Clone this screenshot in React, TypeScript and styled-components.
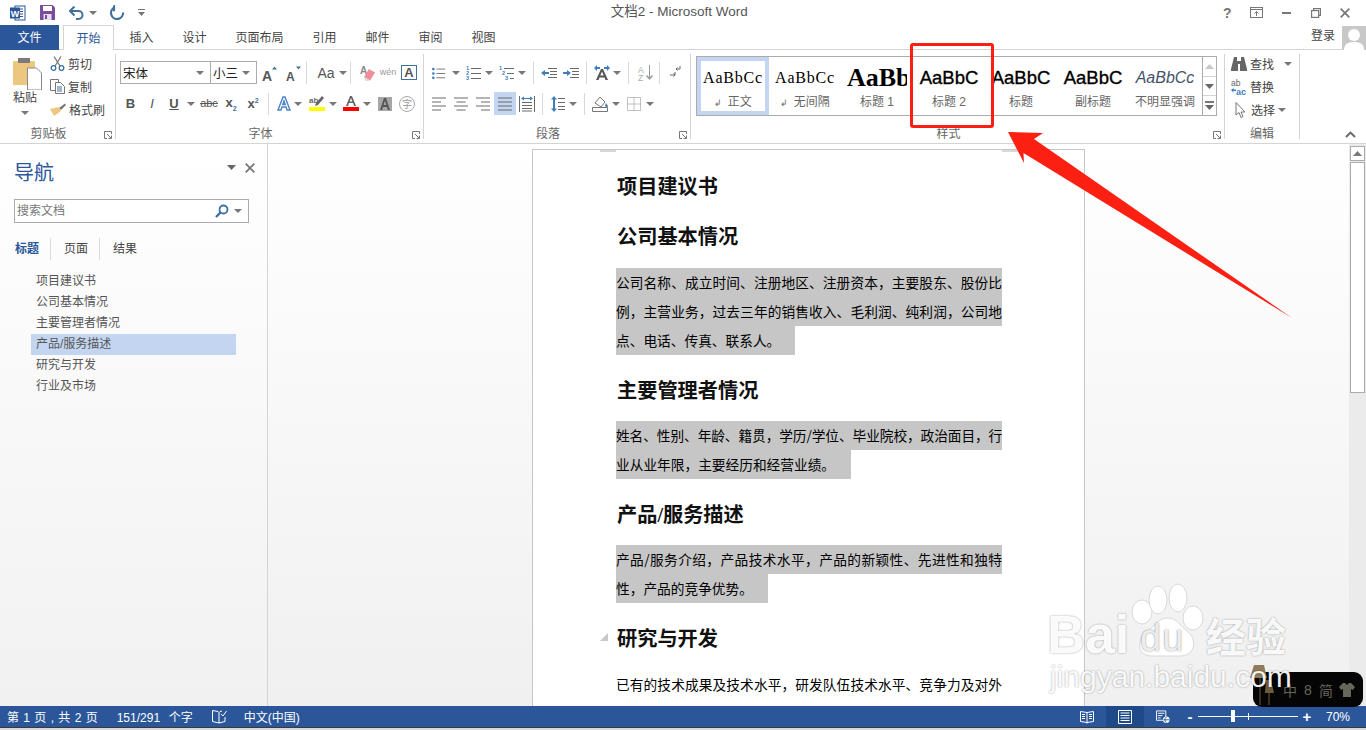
import React from "react";
import styled, { createGlobalStyle } from "styled-components";

const UI = `"Liberation Sans", "Noto Sans CJK SC", sans-serif`;
const BLUE = "#2b579a";
const ICON = "#6a6a6a";
const ACCENT = "#41719c";

const Global = createGlobalStyle`
  html, body { margin: 0; padding: 0; background: #fff; overflow: hidden; }
  * { box-sizing: border-box; }
`;

const Screen = styled.div`
  position: relative; width: 1366px; height: 730px; overflow: hidden;
  display: flex; flex-direction: column;
  font-family: ${UI}; font-size: 12px; color: #444; background: #fff;
`;

/* ---------- title bar ---------- */
const TitleBar = styled.header`
  flex: none; height: 25px; position: relative;
  display: flex; align-items: center; padding-left: 10px;
`;
const QuickTool = styled.span<{ $w: number; $ml?: number }>`
  width: ${p => p.$w}px; margin-left: ${p => p.$ml ?? 0}px; height: 16px;
  display: flex; align-items: center; justify-content: center; flex: none;
`;
const TitleText = styled.div`
  flex: 1; text-align: center; font-size: 13.5px; line-height: 16px; color: #555; padding: 0 0 2px 0; white-space: nowrap;
`;
const WindowButtons = styled.div`display: flex; align-items: center; padding-right: 6px;`;
const WinBtn = styled.span`
  width: 29.5px; height: 16px; display: flex; align-items: center; justify-content: center;
  font-size: 14px; font-weight: bold; color: #777;
`;

/* ---------- tabs ---------- */
const TabRow = styled.nav`
  flex: none; height: 25px; display: flex; align-items: stretch;
  border-bottom: 1px solid #d4d4d4;
`;
const FileTab = styled.div`
  width: 59px; height: 25px; background: ${BLUE}; color: #fff; margin-right: 4px; padding-bottom: 2px;
  display: flex; align-items: center; justify-content: center;
`;
const ActiveTab = styled.div`
  width: 51px; height: 25px; background: #fff; color: ${BLUE}; margin-right: 1px; padding-bottom: 2px;
  border: 1px solid #d4d4d4; border-bottom: 0;
  display: flex; align-items: center; justify-content: center;
`;
const Tab = styled.div`
  padding: 0 14.5px 2px; display: flex; align-items: center; color: #444;
`;
const Login = styled.div`
  margin-left: auto; display: flex; align-items: flex-start; gap: 7px; color: #444;
  span { line-height: 20px; padding-top: 1px; }
`;
const Avatar = styled.div`width: 24px; height: 24px; margin-top: 1px; background: #c8c8c8; overflow: hidden;`;

/* ---------- ribbon ---------- */
const Ribbon = styled.section`
  flex: none; height: 94px; padding: 4px 0; display: flex;
  border-bottom: 1px solid #d4d4d4; background: #fff;
`;
const Group = styled.div<{ $w: number }>`
  width: ${p => p.$w}px; flex: none; height: 85px; position: relative;
  display: flex; flex-direction: column; border-right: 1px solid #d4d4d4;
`;
const GroupBody = styled.div<{ $pl?: number; $pt?: number }>`
  flex: 1; min-height: 0; padding: ${p => p.$pt ?? 7}px 0 0 ${p => p.$pl ?? 0}px;
  display: flex; flex-direction: column; gap: 8px;
`;
const GroupLabel = styled.div<{ $launch?: boolean }>`
  flex: none; height: 15px; line-height: 15px; margin-bottom: -3px; text-align: center; color: #666;
  padding-right: ${p => (p.$launch ? 18 : 0)}px;
`;
const Launcher = styled.span`position: absolute; right: 3px; bottom: 0; display: flex;`;
const ToolRow = styled.div`display: flex; align-items: center; height: 23px;`;
const Tool = styled.span<{ $w: number; $ml?: number; $on?: boolean }>`
  width: ${p => p.$w}px; margin-left: ${p => p.$ml ?? 0}px; height: 23px; flex: none;
  display: flex; align-items: center; justify-content: center;
  background: ${p => (p.$on ? "#c3d5f0" : "transparent")}; color: #555;
`;
const VSep = styled.i<{ $ml?: number }>`
  width: 1px; height: 22px; margin-left: ${p => p.$ml ?? 0}px; background: #d9d9d9; flex: none;
`;
const Caret = styled.i<{ $ml?: number }>`
  display: block; flex: none; width: 8px; height: 4px; margin-left: ${p => p.$ml ?? 0}px;
  border-top: 4px solid #777; border-left: 4px solid transparent; border-right: 4px solid transparent;
`;
const FontBox = styled.div<{ $w: number; $ml?: number }>`
  width: ${p => p.$w}px; margin-left: ${p => p.$ml ?? 0}px; height: 23px; flex: none;
  border: 1px solid #ababab; padding: 0 6px 0 2px; background: #fff;
  display: flex; align-items: center; justify-content: space-between; color: #222; font-size: 12.5px;
`;
const LetterIcon = styled.b<{ $size?: number; $color?: string; $weight?: number; $italic?: boolean; $line?: string }>`
  font-size: ${p => p.$size ?? 13}px; color: ${p => p.$color ?? "#555"};
  font-weight: ${p => p.$weight ?? 700}; font-style: ${p => (p.$italic ? "italic" : "normal")};
  font-family: "Liberation Sans", sans-serif; line-height: 1;
  text-decoration: ${p => p.$line ?? "none"};
  sub, sup { font-size: 7px; color: ${ACCENT}; }
`;
const BoxedA = styled(LetterIcon)`border: 1px solid ${ACCENT}; padding: 0 2px;`;
const RoundChar = styled(LetterIcon)`
  border: 1px solid #aaa; border-radius: 8px; padding: 2px;
  font-family: "Noto Sans CJK SC", sans-serif;
`;

const ClipWrap = styled.div`flex: 1; display: flex; min-height: 0;`;
const PasteCol = styled.div`
  width: 50px; padding: 4px 0 0 13px; flex: none;
  display: flex; flex-direction: column; align-items: flex-start; color: #444;
  span { line-height: 16px; margin-top: 0; }
  i { margin: 5px 0 0 8px; }
`;
const SmallCmds = styled.div`margin-top: -2px; display: flex; flex-direction: column;`;
const SmallCmd = styled.div<{ $pl?: number }>`
  height: 23px; display: flex; align-items: center; gap: 3px; color: #444; padding-left: ${p => p.$pl ?? 0}px;
  svg { flex: none; }
`;

/* styles gallery */
const Gallery = styled.div`
  margin: 2px 0 0 5px; width: 521px; height: 60px; flex: none;
  border: 1px solid #ababab; display: flex; background: #fff;
`;
const StyleItems = styled.div`flex: 1; display: flex; overflow: hidden;`;
const StyleItem = styled.div<{ $on?: boolean }>`
  width: 72px; height: 58px; flex: none; overflow: hidden; padding: 3px 3px 0;
  border: ${p => (p.$on ? "4px solid #c3d5f0" : "4px solid transparent")};
  display: flex; flex-direction: column; align-items: center;
`;
const StyleSample = styled.div<{ $kind: string }>`
  height: 27px; line-height: 27px; width: 60px; overflow: hidden; white-space: nowrap; color: #000;
  font-family: ${p => (p.$kind === "serif" || p.$kind === "big" ? `"Liberation Serif", serif` : `"Liberation Sans", sans-serif`)};
  font-size: ${p => ({ serif: 16, big: 26, head: 18.5, mute: 16 } as Record<string, number>)[p.$kind]}px;
  font-weight: ${p => (p.$kind === "big" ? 700 : 400)};
  font-style: ${p => (p.$kind === "mute" ? "italic" : "normal")};
  letter-spacing: ${p => (p.$kind === "serif" ? "0.8px" : "0")};
  text-align: ${p => (p.$kind === "big" ? "left" : "center")};
  ${p => (p.$kind === "head" ? "-webkit-text-stroke: 0.35px #000;" : "")}
  ${p => (p.$kind === "mute" ? "color: #44546a;" : "")}
`;
const StyleName = styled.div`
  line-height: 15px; margin-top: 3.5px; color: #666; white-space: nowrap; font-size: 12px;
  small { font-size: 9px; margin-right: 2px; }
`;
const GalleryScroll = styled.div`
  width: 14px; flex: none; border-left: 1px solid #ababab;
  display: flex; flex-direction: column;
`;
const ScrollCell = styled.span`
  flex: 1; display: flex; flex-direction: column; gap: 2px; align-items: center; justify-content: center;
  & + & { border-top: 1px solid #d4d4d4; }
`;
const Chevron = styled.span`position: absolute; left: 1345px; top: 131px; display: flex;`;

/* ---------- body ---------- */
const Main = styled.main`flex: 1; min-height: 0; display: flex;`;
const NavPane = styled.aside`
  width: 268px; flex: none; border-right: 1px solid #d4d4d4;
  background: linear-gradient(#fff, #f1f1f1); display: flex; flex-direction: column;
`;
const NavHead = styled.div`
  margin-top: 15px; height: 27px; padding: 0 12px 0 14px; display: flex; align-items: flex-start; justify-content: space-between;
`;
const NavTitle = styled.div`font-size: 20px; line-height: 28px; color: ${BLUE};`;
const NavCtrls = styled.div`display: flex; align-items: center; gap: 9px; height: 17px;`;
const SearchBox = styled.div`
  margin: 13px 0 0 14px; width: 235px; height: 24px; background: #fff; border: 1px solid #ababab;
  display: flex; align-items: center; padding: 0 6px 0 2px; gap: 5px; color: #777;
  span { flex: 1; line-height: 20px; }
`;
const NavTabs = styled.div`margin: 15px 0 0 15px; height: 21px; display: flex; align-items: center;`;
const NavTab = styled.span<{ $on?: boolean }>`
  color: ${p => (p.$on ? BLUE : "#444")}; font-weight: ${p => (p.$on ? 700 : 400)}; line-height: 22px;
  & + & { margin-left: 11px; padding-left: 13px; border-left: 1px solid #dcdcdc; }
`;
const Outline = styled.ul`list-style: none; margin: 12px 0 0 31px; padding: 0; width: 205px;`;
const OutlineItem = styled.li<{ $on?: boolean }>`
  height: 21px; line-height: 21px; padding-left: 5px; color: #555;
  background: ${p => (p.$on ? "#c3d5f0" : "transparent")};
`;

const DocArea = styled.div`
  flex: 1; min-width: 0; overflow: hidden; background: linear-gradient(#fff, #f0f0f0); padding: 5px 0 0 264px;
`;
const Page = styled.article`
  position: relative; width: 553px; min-height: 620px; background: #fff;
  border: 1px solid #c6c6c6; border-bottom: 0; padding: 21px 0 0 83px; color: #000;
  font-family: "Liberation Serif", "Noto Sans CJK SC", serif;
`;
const CropMark = styled.i<{ $side: "l" | "r" }>`
  position: absolute; top: 0; ${p => (p.$side === "l" ? "left: 67px;" : "right: 66px;")}
  width: 16px; height: 2px; background: #d8d8d8;
`;
const Heading = styled.h2<{ $mb?: number }>`
  margin: 0 0 ${p => p.$mb ?? 16.5}px 1px; height: 30px; line-height: 32px; font-size: 20.2px; font-weight: 700; color: #111;
  position: relative;
  & ~ & { margin-top: 20px; }
`;
const Fold = styled.i`
  position: absolute; left: -17px; top: 10px; width: 0; height: 0;
  border-bottom: 8px solid #c8c8c8; border-left: 8px solid transparent;
`;
const Para = styled.div`font-family: "Noto Sans CJK SC", sans-serif;`;
const Line = styled.div<{ $w?: number; $plain?: boolean; $tight?: boolean }>`
  width: ${p => p.$w ?? 386}px; height: 29px; line-height: 29px; font-size: 13.7px; white-space: nowrap;
  background: ${p => (p.$plain ? "transparent" : "#c6c6c6")}; color: #000; overflow: hidden;
  letter-spacing: ${p => (p.$tight ? "-0.3px" : "0")};
  ${p => (p.$w ? "" : "white-space: normal; text-align: justify; text-align-last: justify;")}
`;

const ScrollBar = styled.div`
  width: 17px; flex: none; background: #ebebeb; padding: 2px 1px 0 1px;
  display: flex; flex-direction: column; gap: 1px; align-items: stretch;
`;
const ScrollUp = styled.span`
  height: 15px; border: 1px solid #ababab; background: #fff;
  display: flex; align-items: center; justify-content: center;
`;
const ScrollThumb = styled.span`height: 231px; border: 1px solid #ababab; background: #fff;`;

/* ---------- status bar ---------- */
const StatusBar = styled.footer`
  flex: none; height: 21px; background: ${BLUE}; color: #fff; display: flex; align-items: center; padding-left: 7px;
  white-space: nowrap; word-spacing: 1px;
`;
const StatusText = styled.span<{ $ml?: number }>`margin-left: ${p => p.$ml ?? 0}px; display: flex; align-items: center;`;
const ViewBtn = styled.span<{ $on?: boolean; $ml?: number }>`
  width: ${p => (p.$on ? 38 : 14)}px; height: 21px; margin-left: ${p => p.$ml ?? 0}px; flex: none;
  background: ${p => (p.$on ? "#1f4a8a" : "transparent")}; display: flex; align-items: center; justify-content: center;
`;
const StatusRight = styled.div`margin-left: auto; display: flex; align-items: center; padding-right: 16px;`;
const ZoomTrack = styled.div`
  position: relative; width: 100px; height: 1px; background: #fff; margin: 0 4px 0 3px;
`;
const ZoomThumb = styled.i`position: absolute; left: 33px; top: -6px; width: 4px; height: 12px; background: #fff;`;
const ZoomTick = styled.i`position: absolute; left: 50px; top: -3px; width: 1px; height: 7px; background: #fff;`;
const ZoomSign = styled.span<{ $ml?: number }>`
  font-size: 15px; font-weight: 700; width: 10px; text-align: center; line-height: 1; margin-left: ${p => p.$ml ?? 0}px;
`;
const BottomEdge = styled.div`flex: none; height: 3px; background: linear-gradient(#3a3a3a 0 1px, #d8d8d8 1px);`;

/* ---------- overlays ---------- */
const RedFrame = styled.div`
  position: absolute; left: 910px; top: 43px; width: 84px; height: 85px;
  border: 3px solid #fb1e14; border-radius: 3px;
`;
const ArrowLayer = styled.svg`position: absolute; left: 1000px; top: 125px;`;
const Watermark = styled.div`
  position: absolute; left: 1048px; top: 582px; width: 245px; height: 115px; color: rgba(255,255,255,0.95);
  font-family: "Liberation Sans", sans-serif; white-space: nowrap;
  text-shadow: 0 0 2px rgba(0,0,0,0.4);
`;
const MarkBrand = styled.div`
  position: absolute; left: -1px; top: 23px; font-size: 53px; font-weight: 700; line-height: 60px;
`;
const MarkDu = styled.div`
  position: absolute; left: 92px; top: 34px; font-size: 38px; line-height: 44px; letter-spacing: 1px;
  color: rgba(255,255,255,0.9); text-shadow: 0 0 1.5px rgba(0,0,0,0.6);
`;
const MarkCn = styled.div`
  position: absolute; left: 158px; top: 28px; font-size: 40px; font-weight: 700; line-height: 50px;
  font-family: "Noto Sans CJK SC", sans-serif;
`;
const MarkUrl = styled.div`
  position: absolute; left: 2px; top: 78px; font-size: 30px; line-height: 34px;
`;
const PawArt = styled.svg`position: absolute; left: 80px; top: 0;`;
const ImeBar = styled.div`
  position: absolute; left: 1253px; top: 672px; width: 110px; height: 35px; border-radius: 9px;
  background: #050505; display: flex; align-items: center; padding-left: 28px; color: #66665a; font-size: 14px;
  span { width: 18px; text-align: center; }
  svg { margin-left: 4px; }
`;
const Lamp = styled.svg`position: absolute; left: 1249px; top: 664px;`;

/* ---------- icons ---------- */
const Lines = ({ rows, w = 14 }: { rows: [number, number][]; w?: number }) => (
  <svg width={w} height="14" viewBox={`0 0 ${w} 14`}>
    {rows.map(([x, l], i) => (
      <rect key={i} x={x} y={1 + i * (12 / (rows.length - 1 || 1)) - 0.5} width={l} height="1" fill={ICON} />
    ))}
  </svg>
);
const WordLogo = () => (
  <svg width="16" height="16" viewBox="0 0 16 16">
    <rect x="5" y="1" width="10" height="14" fill="#fff" stroke={BLUE} />
    <path d="M9 4h4M9 6.500h4M9 9h4M9 11.500h4" stroke={BLUE} />
    <rect x="0" y="2.500" width="10" height="11" fill={BLUE} />
    <text x="5" y="11.500" fontSize="9" fontWeight="700" fill="#fff" textAnchor="middle" fontFamily="Liberation Sans">W</text>
  </svg>
);
const SaveIcon = () => (
  <svg width="15" height="15" viewBox="0 0 15 15">
    <path d="M0 0h12.500L15 2.500V15H0z" fill="#7d4b9c" />
    <rect x="3" y="1" width="9" height="5" fill="#fff" />
    <rect x="3.500" y="9" width="8" height="6" fill="#e9def0" />
    <rect x="5" y="10" width="2" height="4" fill="#7d4b9c" />
  </svg>
);
const UndoIcon = () => (
  <svg width="15" height="14" viewBox="0 0 15 14" fill="none">
    <path d="M2 5h7.500a4 4 0 0 1 0 8H7" stroke={ACCENT} strokeWidth="2" />
    <path d="M5.500 0.500 1 5l4.500 4.500" stroke={ACCENT} strokeWidth="2" />
  </svg>
);
const RedoIcon = () => (
  <svg width="15" height="15" viewBox="0 0 15 15" fill="none">
    <path d="M5 2.400A6 6 0 1 0 13 7.500" stroke={ACCENT} strokeWidth="2.200" />
    <path d="M4.500 0v6h-1V1z" fill={ACCENT} stroke={ACCENT} />
  </svg>
);
const QatMore = () => (
  <svg width="8" height="8" viewBox="0 0 8 8"><rect y="0" width="7" height="1" fill="#777" /><path d="M0 3h7L3.500 7z" fill="#777" /></svg>
);
const RibbonDisplay = () => (
  <svg width="13" height="11" viewBox="0 0 13 11" fill="none" stroke="#777"><rect x=".5" y=".5" width="12" height="10" /><path d="M.5 2.500h12M6.500 9V4.500M4.500 6.500l2-2 2 2" /></svg>
);
const Minimize = () => <svg width="9" height="2"><rect width="9" height="2" fill="#777" /></svg>;
const Restore = () => (
  <svg width="10" height="10" viewBox="0 0 10 10" fill="none" stroke="#777" strokeWidth="1.200"><rect x=".6" y="2.600" width="7" height="6.800" /><path d="M2.600 2.400V.6h6.800v6.800H8" /></svg>
);
const CloseX = ({ size = 10 }: { size?: number }) => (
  <svg width={size} height={size} viewBox="0 0 10 10" stroke="#777" strokeWidth="1.800"><path d="M.7.7l8.600 8.600M9.300.7.700 9.300" /></svg>
);
const UserPic = () => (
  <svg width="24" height="24" viewBox="0 0 24 24"><circle cx="12" cy="9" r="6" fill="#fff" /><path d="M2 24c0-6 4-8 10-8s10 2 10 8z" fill="#fff" /></svg>
);
const PasteIcon = () => (
  <svg width="29" height="32" viewBox="0 0 29 32">
    <rect x="0" y="3" width="22" height="24" fill="#ecc77f" />
    <rect x="5" y="0" width="12" height="5" fill="#7a7a7a" />
    <path d="M14.500 10h9l5 5v17h-14z" fill="#fff" stroke="#8a8a8a" />
  </svg>
);
const ScissorsIcon = () => (
  <svg width="15" height="15" viewBox="0 0 15 15" fill="none">
    <path d="M4 .5 10 10M11 .5 5 10" stroke="#777" strokeWidth="1.300" />
    <circle cx="3.500" cy="12" r="2.300" stroke={ACCENT} strokeWidth="1.300" /><circle cx="11.500" cy="12" r="2.300" stroke={ACCENT} strokeWidth="1.300" />
  </svg>
);
const CopyIcon = () => (
  <svg width="15" height="15" viewBox="0 0 15 15" fill="#fff" stroke="#777"><path d="M.5.500h8v11h-8z" /><path d="M5.500 3.500h5l4 4v7h-9z" /><path d="M7 8h5M7 10h5M7 12h5" stroke={ACCENT} /></svg>
);
const BrushIcon = () => (
  <svg width="16" height="15" viewBox="0 0 16 15">
    <path d="M15 1.500 9 6l2 2 5-5z" fill="#777" /><path d="M9 5 0 7l4 7 7-5z" fill="#ecc77f" />
  </svg>
);
const Launch = () => (
  <svg width="8" height="8" viewBox="0 0 8 8" fill="none" stroke="#777"><path d="M7.500 3V.5H.5v7H3" /><path d="M3 3l4 4M7.500 4.500v3h-3" /></svg>
);
const Grow = ({ up }: { up: boolean }) => (
  <svg width="15" height="18" viewBox="0 -2 15 18">
    <text x="0" y="15" fontSize={up ? 14 : 12} fontWeight="700" fill="#555" fontFamily="Liberation Sans">A</text>
    <path d={up ? "M10 3.500l2.500-3 2.500 3z" : "M10 .5h5l-2.500 3z"} fill={ACCENT} />
  </svg>
);
const EraserIcon = () => (
  <svg width="15" height="16" viewBox="0 0 15 16">
    <text x="0" y="9" fontSize="10" fontWeight="700" fill="#888" fontFamily="Liberation Sans">A</text>
    <path d="M9 4l6 3.500-5 8-6-3.500z" fill="#ee8e98" /><path d="M4 12l6 3.500-1 0.500H5z" fill="#ddd" />
  </svg>
);
const AccentA = () => (
  <svg width="14" height="15" viewBox="0 0 14 15" fill="#fff" stroke="#4c84c3" strokeWidth="1.400"><path d="M1 14 6 1h2l5 13h-3l-1-3H5l-1 3zM5.800 8.500h2.400L7 5z" /></svg>
);
const HighlightIcon = () => (
  <svg width="16" height="15" viewBox="0 0 16 15">
    <text x="0" y="6.500" fontSize="8" fontWeight="700" fill="#666" fontFamily="Liberation Sans">ab</text>
    <path d="M13 0l2 2-6 7-3 1 1-3z" fill="#666" /><rect y="11" width="16" height="4" fill="#ffff00" />
  </svg>
);
const FontColor = () => (
  <svg width="16" height="15" viewBox="0 0 16 15">
    <path d="M3 10 7 0h2l4 10h-2l-1-3H6l-1 3zM6.700 5.500h2.600L8 2z" fill="#666" /><rect y="11" width="16" height="4" fill="#f00" />
  </svg>
);
const ShadeA = () => (
  <svg width="14" height="14" viewBox="0 0 14 14"><rect width="14" height="14" fill="#a6a6a6" /><path d="M2 13 6 1h2l4 12h-2l-1-3H5l-1 3zM5.600 8h2.800L7 3.500z" fill="#555" /></svg>
);
const Bullets = ({ kind }: { kind: "dot" | "num" | "multi" }) => (
  <svg width="16" height="14" viewBox="0 0 16 14">
    {[1, 6, 11].map((y, i) =>
      kind === "dot"
        ? <rect key={y} x="0" y={y} width="3" height="3" rx="1.500" fill="#3f7dbc" />
        : <text key={y} x={kind === "multi" ? i * 3 : 0} y={y + 3} fontSize="5.500" fontWeight="700" fill="#3f7dbc" fontFamily="Liberation Sans">{i + 1}</text>
    )}
    {[2, 7, 12].map((y, i) => <rect key={y} x={kind === "multi" ? 5 + i * 3 : 5} y={y} width={kind === "multi" ? 10 - i * 3 : 10} height="1" fill={ICON} />)}
  </svg>
);
const IndentIcon = ({ out }: { out?: boolean }) => (
  <svg width="16" height="12" viewBox="0 0 16 12">
    <path d="M7 1h9v1H7zM9 4h7v1H9zM9 7h7v1H9zM7 10h9v1H7z" fill={ICON} />
    <path d={out ? "M0 6l4-3v2h4v2H4v2z" : "M8 6 4 3v2H0v2h4v2z"} fill="#3f7dbc" />
  </svg>
);
const DirectionIcon = () => (
  <svg width="16" height="15" viewBox="0 0 16 15">
    <path d="M0 3l3-3v2h3v2H3v2zM16 3l-3-3v2h-3v2h3v2z" fill="#3f7dbc" />
    <path d="M2 15 7 4h2l5 11h-2.500l-1-2.500h-5L4.500 15zM6.300 10.500h3.400L8 6.500z" fill="#555" />
  </svg>
);
const SortIcon = () => (
  <svg width="15" height="16" viewBox="0 0 15 16">
    <text x="0" y="7.500" fontSize="8.500" fill="#aaa" fontFamily="Liberation Sans">A</text>
    <text x="0" y="15.500" fontSize="8.500" fill="#aaa" fontFamily="Liberation Sans">Z</text>
    <path d="M11 0h1v12l2-2 1 1-3.500 4L8 11l1-1 2 2z" fill="#999" />
  </svg>
);
const ParaMark = () => (
  <svg width="11" height="13" viewBox="0 0 11 13" fill="none" stroke="#666"><path d="M10 0v3H6M7.500 1.500 6 3l1.500 1.500" /><path d="M0 9h5V6M3.500 7.500 5 9l-1.500 1.500" /></svg>
);
const DistIcon = () => (
  <svg width="16" height="16" viewBox="0 0 16 16">
    <path d="M0 0h1v16H0zM15 0h1v16h-1zM3 6h10v1H3zM3 9h10v1H3zM3 12h10v1H3zM3 14.500h10v1H3z" fill={ICON} />
    <path d="M2 2.500 5 .5v1.500h6V.5l3 2-3 2V3H5v1.500z" fill="#3f7dbc" />
  </svg>
);
const SpacingIcon = () => (
  <svg width="14" height="16" viewBox="0 0 14 16">
    <path d="M3 0 6 3.500H4v9h2L3 16 0 12.500h2v-9H0z" fill="#3f7dbc" />
    <path d="M7 2h7v1H7zM7 6h7v1H7zM7 10h7v1H7zM7 13h7v1H7z" fill={ICON} />
  </svg>
);
const ShadingIcon = () => (
  <svg width="16" height="16" viewBox="0 0 16 16">
    <path d="M3 7 8 1l5 5-4 5z" fill="#fff" stroke="#777" /><path d="M14 7l2 3-1 2-2-2z" fill="#3f7dbc" />
    <path d="M.5 11.500h15v4H.5z" fill="#fff" stroke="#777" />
  </svg>
);
const BorderIcon = () => (
  <svg width="14" height="14" viewBox="0 0 14 14" fill="none" stroke="#888" strokeDasharray="1 1"><path d="M.5.500h13v13H.5zM7 .5v13M.5 7h13" /></svg>
);
const Binoculars = () => (
  <svg width="16" height="14" viewBox="0 0 16 14"><path d="M3 0h3v4h4V0h3l3 12v2H9V7H7v7H0v-2z" fill="#666" /></svg>
);
const ReplaceIcon = () => (
  <svg width="16" height="16" viewBox="0 0 16 16">
    <text x="0" y="7" fontSize="8.500" fill="#666" fontFamily="Liberation Sans">ab</text>
    <text x="5" y="15.500" fontSize="9" fontWeight="700" fill="#3f7dbc" fontFamily="Liberation Sans">ac</text>
    <path d="M0 11l2.500-2v1.500H5v1.500H2.500V13.500z" fill="#3f7dbc" />
  </svg>
);
const PointerIcon = () => (
  <svg width="13" height="16" viewBox="0 0 13 16"><path d="M1 .5V13l3-2.500 2 5 2-1-2-4.500h4z" fill="#fff" stroke="#777" /></svg>
);
const UpTri = ({ color = "#777" }: { color?: string }) => (
  <svg width="9" height="5" viewBox="0 0 9 5"><path d="M0 5 4.500 0 9 5z" fill={color} /></svg>
);
const DownTri = () => (
  <svg width="9" height="5" viewBox="0 0 9 5"><path d="M0 0h9L4.500 5z" fill="#666" /></svg>
);
const Magnifier = () => (
  <svg width="14" height="14" viewBox="0 0 14 14" fill="none" stroke="#3f6fa8" strokeWidth="1.800"><circle cx="8.500" cy="5.500" r="4" /><path d="M5.500 8.500 1 13" strokeWidth="2.400" /></svg>
);
const ChevronUp = () => (
  <svg width="11" height="7" viewBox="0 0 11 7" fill="none" stroke="#666" strokeWidth="1.800"><path d="M1 6l4.500-4.500L10 6" /></svg>
);
const BookCheck = ({ size = 15 }: { size?: number }) => (
  <svg width={size} height={size} viewBox="0 0 15 15" fill="none" stroke="#fff"><path d="M.5 1.500 6 2.500l1 1 1-1 2-.5M7 3.500V14M.5 1.500V12.500L7 14l6-1.500V8" /><path d="M9 5l2 2 3.500-5" /></svg>
);
const ReadIcon = () => (
  <svg width="14" height="14" viewBox="0 0 14 14" fill="none" stroke="#fff"><path d="M.5 1.500 7 2.500l6.500-1v10L7 12.500l-6.500-1zM7 2.500v11M2 4.500h3M2 6.500h3M2 8.500h3M9 4.500h3M9 6.500h3M9 8.500h3" /></svg>
);
const PrintIcon = () => (
  <svg width="14" height="14" viewBox="0 0 14 14" fill="none" stroke="#fff"><path d="M.5.500h13v13H.5zM2.500 3h9M2.500 5.500h9M2.500 8h9M2.500 10.500h9" /></svg>
);
const WebIcon = () => (
  <svg width="15" height="14" viewBox="0 0 15 14" fill="none"><path d="M.5.500h10v10H.5zM2 3h7M2 5.500h5M2 8h3" stroke="#fff" /><circle cx="11" cy="10" r="3.500" fill="#fff" /><path d="M8 10h6M11 7c-2 2-2 4 0 6" stroke={BLUE} /></svg>
);

const styleItems: { kind: string; sample: string; name: string; mark?: boolean; on?: boolean }[] = [
  { kind: "serif", sample: "AaBbCc", name: "正文", mark: true, on: true },
  { kind: "serif", sample: "AaBbCc", name: "无间隔", mark: true },
  { kind: "big", sample: "AaBbCc", name: "标题 1" },
  { kind: "head", sample: "AaBbC", name: "标题 2" },
  { kind: "head", sample: "AaBbC", name: "标题" },
  { kind: "head", sample: "AaBbC", name: "副标题" },
  { kind: "mute", sample: "AaBbCc", name: "不明显强调" },
];

const outline = ["项目建议书", "公司基本情况", "主要管理者情况", "产品/服务描述", "研究与开发", "行业及市场"];

export default function App() {
  return (
    <Screen>
      <Global />
      <TitleBar>
        <QuickTool $w={16}><WordLogo /></QuickTool>
        <QuickTool $w={15} $ml={14}><SaveIcon /></QuickTool>
        <QuickTool $w={15} $ml={14}><UndoIcon /></QuickTool>
        <Caret $ml={5} />
        <QuickTool $w={15} $ml={13}><RedoIcon /></QuickTool>
        <QuickTool $w={8} $ml={13}><QatMore /></QuickTool>
        <TitleText>文档2 - Microsoft Word</TitleText>
        <WindowButtons>
          <WinBtn>?</WinBtn>
          <WinBtn><RibbonDisplay /></WinBtn>
          <WinBtn><Minimize /></WinBtn>
          <WinBtn><Restore /></WinBtn>
          <WinBtn><CloseX /></WinBtn>
        </WindowButtons>
      </TitleBar>

      <TabRow>
        <FileTab>文件</FileTab>
        <ActiveTab>开始</ActiveTab>
        <Tab>插入</Tab>
        <Tab>设计</Tab>
        <Tab>页面布局</Tab>
        <Tab>引用</Tab>
        <Tab>邮件</Tab>
        <Tab>审阅</Tab>
        <Tab>视图</Tab>
        <Login>
          <span>登录</span>
          <Avatar><UserPic /></Avatar>
        </Login>
      </TabRow>

      <Ribbon>
        <Group $w={116}>
          <ClipWrap>
            <PasteCol>
              <PasteIcon />
              <span>粘贴</span>
              <Caret />
            </PasteCol>
            <SmallCmds>
              <SmallCmd><ScissorsIcon />剪切</SmallCmd>
              <SmallCmd><CopyIcon />复制</SmallCmd>
              <SmallCmd><BrushIcon />格式刷</SmallCmd>
            </SmallCmds>
          </ClipWrap>
          <GroupLabel $launch>剪贴板<Launcher><Launch /></Launcher></GroupLabel>
        </Group>

        <Group $w={308}>
          <GroupBody $pl={4}>
            <ToolRow>
              <FontBox $w={91}>宋体<Caret /></FontBox>
              <FontBox $w={47} $ml={-1}>小三<Caret /></FontBox>
              <Tool $w={24}><Grow up /></Tool>
              <Tool $w={24}><Grow up={false} /></Tool>
              <VSep $ml={1} />
              <Tool $w={26} $ml={6}><LetterIcon $size={14} $weight={400}>Aa</LetterIcon></Tool>
              <Caret />
              <VSep $ml={3} />
              <Tool $w={22} $ml={5}><EraserIcon /></Tool>
              <Tool $w={20}><LetterIcon $size={9} $weight={400} $color="#999">wén</LetterIcon></Tool>
              <Tool $w={18} $ml={2}><BoxedA>A</BoxedA></Tool>
            </ToolRow>
            <ToolRow>
              <Tool $w={21}><LetterIcon>B</LetterIcon></Tool>
              <Tool $w={22}><LetterIcon $italic $weight={400}>I</LetterIcon></Tool>
              <Tool $w={22}><LetterIcon $line="underline">U</LetterIcon></Tool>
              <Caret $ml={2} />
              <Tool $w={22} $ml={3}><LetterIcon $size={11} $weight={400} $line="line-through">abc</LetterIcon></Tool>
              <Tool $w={22}><LetterIcon>x<sub>2</sub></LetterIcon></Tool>
              <Tool $w={22}><LetterIcon>x<sup>2</sup></LetterIcon></Tool>
              <VSep $ml={4} />
              <Tool $w={21} $ml={4}><AccentA /></Tool>
              <Caret />
              <Tool $w={20} $ml={5}><HighlightIcon /></Tool>
              <Caret $ml={2} />
              <Tool $w={20} $ml={4}><FontColor /></Tool>
              <Caret $ml={2} />
              <Tool $w={20} $ml={4}><ShadeA /></Tool>
              <Tool $w={20} $ml={2}><RoundChar $size={10} $weight={400} $color="#999">字</RoundChar></Tool>
            </ToolRow>
          </GroupBody>
          <GroupLabel $launch>字体<Launcher><Launch /></Launcher></GroupLabel>
        </Group>

        <Group $w={267}>
          <GroupBody $pl={8}>
            <ToolRow>
              <Tool $w={14}><Bullets kind="dot" /></Tool>
              <Caret $ml={6} />
              <Tool $w={16} $ml={6}><Bullets kind="num" /></Tool>
              <Caret $ml={3} />
              <Tool $w={16} $ml={6}><Bullets kind="multi" /></Tool>
              <Caret $ml={3} />
              <VSep $ml={7} />
              <Tool $w={16} $ml={7}><IndentIcon out /></Tool>
              <Tool $w={16} $ml={6}><IndentIcon /></Tool>
              <VSep $ml={7} />
              <Tool $w={16} $ml={7}><DirectionIcon /></Tool>
              <Caret $ml={3} />
              <VSep $ml={7} />
              <Tool $w={16} $ml={8}><SortIcon /></Tool>
              <VSep $ml={6} />
              <Tool $w={12} $ml={9}><ParaMark /></Tool>
            </ToolRow>
            <ToolRow>
              <Tool $w={14}><Lines rows={[[0, 14], [0, 9], [0, 14], [0, 9]]} /></Tool>
              <Tool $w={14} $ml={8}><Lines rows={[[0, 14], [2.5, 9], [0, 14], [2.5, 9]]} /></Tool>
              <Tool $w={14} $ml={8}><Lines rows={[[0, 14], [5, 9], [0, 14], [5, 9]]} /></Tool>
              <Tool $w={22} $ml={4} $on><Lines rows={[[0, 14], [0, 14], [0, 14], [0, 14]]} /></Tool>
              <Tool $w={16} $ml={3}><DistIcon /></Tool>
              <VSep $ml={7} />
              <Tool $w={14} $ml={8}><SpacingIcon /></Tool>
              <Caret $ml={4} />
              <VSep $ml={7} />
              <Tool $w={16} $ml={7}><ShadingIcon /></Tool>
              <Caret $ml={4} />
              <Tool $w={14} $ml={7}><BorderIcon /></Tool>
              <Caret $ml={5} />
            </ToolRow>
          </GroupBody>
          <GroupLabel $launch>段落<Launcher><Launch /></Launcher></GroupLabel>
        </Group>

        <Group $w={534}>
          <GroupBody $pt={0} $pl={0}>
            <Gallery>
              <StyleItems>
                {styleItems.map(s => (
                  <StyleItem key={s.name} $on={s.on}>
                    <StyleSample $kind={s.kind}>{s.sample}</StyleSample>
                    <StyleName>{s.mark && <small>↲</small>} {s.name}</StyleName>
                  </StyleItem>
                ))}
              </StyleItems>
              <GalleryScroll>
                <ScrollCell><UpTri color="#c8c8c8" /></ScrollCell>
                <ScrollCell><DownTri /></ScrollCell>
                <ScrollCell><Minimize /><DownTri /></ScrollCell>
              </GalleryScroll>
            </Gallery>
          </GroupBody>
          <GroupLabel $launch>样式<Launcher><Launch /></Launcher></GroupLabel>
        </Group>

        <Group $w={75}>
          <ClipWrap>
            <SmallCmds>
              <SmallCmd $pl={6}><Binoculars />查找<Caret $ml={7} /></SmallCmd>
              <SmallCmd $pl={6}><ReplaceIcon />替换</SmallCmd>
              <SmallCmd $pl={10}><PointerIcon />选择<Caret /></SmallCmd>
            </SmallCmds>
          </ClipWrap>
          <GroupLabel>编辑</GroupLabel>
        </Group>
        <Chevron><ChevronUp /></Chevron>
      </Ribbon>

      <Main>
        <NavPane>
          <NavHead>
            <NavTitle>导航</NavTitle>
            <NavCtrls><DownTri /><CloseX /></NavCtrls>
          </NavHead>
          <SearchBox>
            <span>搜索文档</span>
            <Magnifier />
            <Caret />
          </SearchBox>
          <NavTabs>
            <NavTab $on>标题</NavTab>
            <NavTab>页面</NavTab>
            <NavTab>结果</NavTab>
          </NavTabs>
          <Outline>
            {outline.map(t => (
              <OutlineItem key={t} $on={t === "产品/服务描述"}>{t}</OutlineItem>
            ))}
          </Outline>
        </NavPane>

        <DocArea>
          <Page>
            <CropMark $side="l" />
            <CropMark $side="r" />
            <Heading>项目建议书</Heading>
            <Heading>公司基本情况</Heading>
            <Para>
              <Line>公司名称、成立时间、注册地区、注册资本，主要股东、股份比</Line>
              <Line>例，主营业务，过去三年的销售收入、毛利润、纯利润，公司地</Line>
              <Line $w={179}>点、电话、传真、联系人。</Line>
            </Para>
            <Heading>主要管理者情况</Heading>
            <Para>
              <Line $tight>姓名、性别、年龄、籍贯，学历/学位、毕业院校，政治面目，行</Line>
              <Line $w={235}>业从业年限，主要经历和经营业绩。</Line>
            </Para>
            <Heading $mb={16}>产品/服务描述</Heading>
            <Para>
              <Line>产品/服务介绍，产品技术水平，产品的新颖性、先进性和独特</Line>
              <Line $w={152}>性，产品的竞争优势。</Line>
            </Para>
            <Heading><Fold />研究与开发</Heading>
            <Para>
              <Line $plain>已有的技术成果及技术水平，研发队伍技术水平、竞争力及对外</Line>
            </Para>
          </Page>
        </DocArea>

        <ScrollBar>
          <ScrollUp><UpTri /></ScrollUp>
          <ScrollThumb />
        </ScrollBar>
      </Main>

      <StatusBar>
        <StatusText>第 1 页 , 共 2 页</StatusText>
        <StatusText $ml={19}>151/291&nbsp; 个字</StatusText>
        <StatusText $ml={19}><BookCheck /></StatusText>
        <StatusText $ml={17}>中文(中国)</StatusText>
        <StatusRight>
          <ViewBtn><ReadIcon /></ViewBtn>
          <ViewBtn $on $ml={12}><PrintIcon /></ViewBtn>
          <ViewBtn $ml={12}><WebIcon /></ViewBtn>
          <ZoomSign $ml={15}>-</ZoomSign>
          <ZoomTrack><ZoomThumb /><ZoomTick /></ZoomTrack>
          <ZoomSign>+</ZoomSign>
          <StatusText $ml={14}>70%</StatusText>
        </StatusRight>
      </StatusBar>
      <BottomEdge />

      <RedFrame />
      <ArrowLayer width="300" height="200" viewBox="1000 125 300 200">
        <path d="M1008 132 1043 133 1034 139 1292 318 1023.500 153 1024 163z" fill="#fb2012" />
      </ArrowLayer>

      <ImeBar>
        <span>中</span><span>8</span><span>简</span>
        <svg width="16" height="14" viewBox="0 0 16 14"><path d="M4 0h2l2 2 2-2h2l4 4-2 3-2-1v8H4V6L2 7 0 4z" fill="#66665a" /></svg>
      </ImeBar>
      <Lamp width="26" height="42" viewBox="0 0 26 42">
        <path d="M5 1h10l3 13H1z" fill="#8f7c5a" />
        <path d="M17 16h5l3 13h-9z" fill="#6f5b3c" />
        <path d="M11 14v27M20 29v12" stroke="#6f5b3c" />
      </Lamp>

      <Watermark>
        <PawArt width="90" height="85" viewBox="0 0 90 85" fill="#fff" stroke="#d9d9d9">
          <ellipse cx="14" cy="30" rx="10" ry="12" />
          <ellipse cx="30" cy="18" rx="9" ry="14" />
          <ellipse cx="50" cy="16" rx="9" ry="14" />
          <ellipse cx="65" cy="36" rx="10" ry="12" />
          <path d="M40 36c9 0 12 8 20 14 9 7 8 24-8 24H24C9 74 8 58 19 50c8-6 11-14 21-14z" />
        </PawArt>
        <MarkBrand>Bai</MarkBrand>
        <MarkDu>du</MarkDu>
        <MarkCn>经验</MarkCn>
        <MarkUrl>jingyan.baidu.com</MarkUrl>
      </Watermark>
    </Screen>
  );
}
